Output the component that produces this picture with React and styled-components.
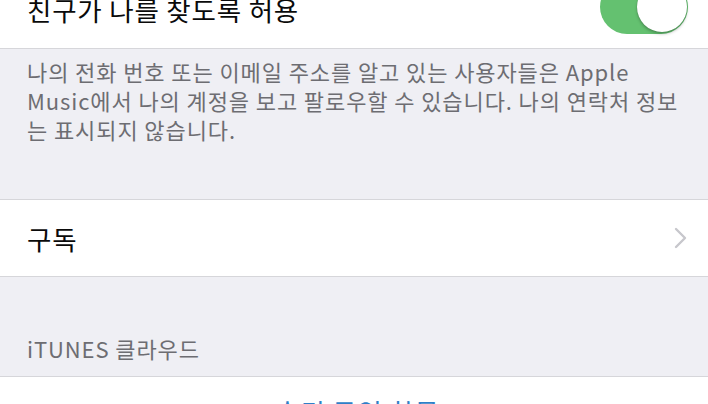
import styled, { createGlobalStyle } from "styled-components";

const GlobalStyle = createGlobalStyle`
  html, body {
    margin: 0;
    padding: 0;
    background: #efeff4;
    overflow: hidden;
  }
  body {
    font-family: "Noto Sans CJK KR", "Noto Sans", sans-serif;
    -webkit-font-smoothing: antialiased;
  }
`;

const Screen = styled.div`
  width: 708px;
  height: 404px;
  overflow: hidden;
  background: #efeff4;
  display: flex;
  flex-direction: column;
`;

// the list is scrolled, so the first row starts above the window
const List = styled.div`
  margin-top: -36px;
  display: flex;
  flex-direction: column;
`;

const Cell = styled.div`
  background: #fff;
  display: flex;
  align-items: center;
  justify-content: ${(p) => (p.$center ? "center" : "space-between")};
  padding: 0 20px 0 27px;
  height: ${(p) => p.$height}px;
  border-top: ${(p) => (p.$noTop ? "none" : "1px solid #d6d6da")};
  border-bottom: 1px solid #d6d6da;
  box-sizing: border-box;
`;

const Label = styled.span`
  font-size: 26.5px;
  color: #0a0a0a;
  letter-spacing: 0.8px;
  transform: translateY(${(p) => p.$shift || 0}px);
`;

const LinkLabel = styled(Label)`
  color: #2f7fc8;
  align-self: flex-start;
  margin-top: 15px;
`;

const Switch = styled.div`
  width: 88px;
  height: 54px;
  border-radius: 27px;
  background: #64c170;
  position: relative;
  transform: translateY(1px);
`;

const Knob = styled.div`
  position: absolute;
  top: 2px;
  right: 1px;
  width: 50px;
  height: 50px;
  border-radius: 50%;
  background: #fff;
  box-shadow: 0 2px 3px rgba(0, 0, 0, 0.25), 0 0 1px rgba(0, 0, 0, 0.2);
`;

const Footer = styled.p`
  margin: 0;
  padding: ${(p) => p.$pad};
  font-size: 22px;
  line-height: 29px;
  color: #6d6d72;
  letter-spacing: 0.9px;
`;

const Chevron = () => (
  <svg width="14" height="22" viewBox="0 0 14 22">
    <path d="M2 2 L11 11 L2 20" fill="none" stroke="#c7c7cc" strokeWidth="2.4" strokeLinecap="round" strokeLinejoin="round" />
  </svg>
);

export default function App() {
  return (
    <Screen>
      <GlobalStyle />
      <List>
        <Cell $height={85} $noTop>
          <Label $shift={3}>친구가 나를 찾도록 허용</Label>
          <Switch>
            <Knob />
          </Switch>
        </Cell>
        <Footer $pad="8px 27px 55px">
          나의 전화 번호 또는 이메일 주소를 알고 있는 사용자들은 Apple Music에서 나의 계정을 보고 팔로우할 수 있습니다. 나의 연락처 정보는 표시되지 않습니다.
        </Footer>
        <Cell $height={78}>
          <Label>구독</Label>
          <Chevron />
        </Cell>
        <Footer $pad="57px 27px 13px">iTUNES 클라우드</Footer>
        <Cell $height={78} $center>
          <LinkLabel>숨긴 구입 항목</LinkLabel>
        </Cell>
      </List>
    </Screen>
  );
}
